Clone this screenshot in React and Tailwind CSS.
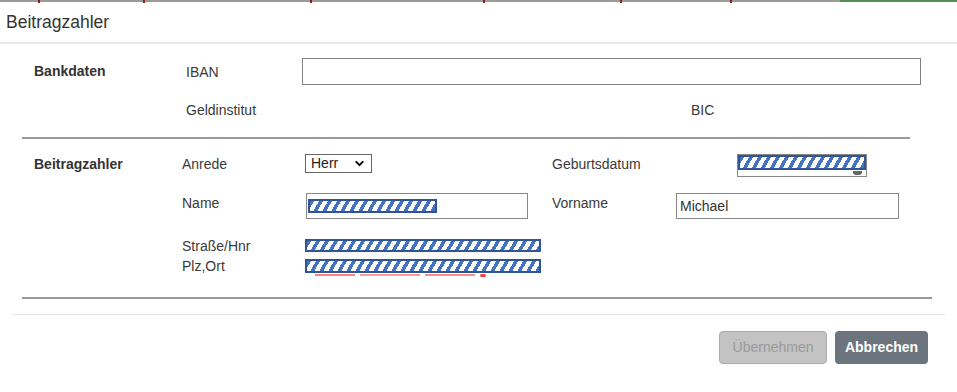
import { ChevronDown } from 'lucide-react';

const hatch =
  'border-2 border-[#2f5597] bg-[image:repeating-linear-gradient(120deg,#4472c4_0px,#4472c4_3.5px,#ffffff_3.5px,#ffffff_7.8px)]';

const strip = [38, 103, 165, 171, 135, 108, 108];

function TopStrip() {
  return (
    <div className="flex h-[2px] w-full">
      {strip.map((w, i) => (
        <div key={i} className="flex h-full">
          <div className="h-full bg-[#9a9a9a]" style={{ width: w }} />
          {i < strip.length - 1 && <div className="h-[3px] w-[2px] bg-[#8b1e1e]" />}
        </div>
      ))}
      <div className="h-full flex-1 bg-[#4f8f4f]" />
    </div>
  );
}

function Label({ children, className = '' }) {
  return <div className={`shrink-0 text-[14px] leading-[20px] text-[#3a3a3a] ${className}`}>{children}</div>;
}

export default function App() {
  return (
    <div className="h-[392px] w-[957px] overflow-hidden bg-white font-['Liberation_Sans',Arial,sans-serif]">
      <TopStrip />

      {/* header */}
      <div className="flex h-[42px] items-center border-b-2 border-[#e4e8ee] px-[6px]">
        <h1 className="text-[17.5px] text-[#333]">Beitragzahler</h1>
      </div>

      {/* Bankdaten */}
      <div className="ml-[22px] w-[888px] border-b-2 border-[#999] pt-[14px] pb-[17px]">
        <div className="flex h-[27px] items-center">
          <div className="w-[164px] shrink-0 pl-[12px] text-[14px] font-bold text-[#333]">Bankdaten</div>
          <Label className="w-[116px]">IBAN</Label>
          <div className="h-[27px] w-[619px] shrink-0 border border-[#808080] bg-white" />
        </div>
        <div className="mt-[15px] flex h-[20px] items-center">
          <div className="w-[164px] shrink-0" />
          <Label className="w-[505px]">Geldinstitut</Label>
          <Label>BIC</Label>
        </div>
      </div>

      {/* Beitragzahler */}
      <div className="ml-[22px] flex w-[910px] border-b-2 border-[#999] pt-[15px] pb-[20px]">
        <div className="w-[160px] shrink-0 pl-[12px] text-[14px] leading-[20px] font-bold text-[#333]">Beitragzahler</div>
        <div className="flex flex-col">
          <div className="flex h-[23px] items-start">
            <Label className="w-[123px]">Anrede</Label>
            <div className="w-[247px] shrink-0">
              <div className="flex h-[19px] w-[67px] items-center justify-between border border-[#666] px-[5px] text-[14px] text-[#222]">
                <span>Herr</span>
                <ChevronDown size={13} strokeWidth={3.5} className="text-black" />
              </div>
            </div>
            <Label className="w-[185px]">Geburtsdatum</Label>
            <div className="flex h-[23px] w-[130px] shrink-0 flex-col border border-[#888]">
              <div className={`h-[15px] w-full ${hatch}`} />
              <div className="flex flex-1 justify-end pr-[4px]">
                <div className="mt-[1px] h-[4px] w-[9px] rounded-b-[3px] bg-[#666]" />
              </div>
            </div>
          </div>

          <div className="mt-[16px] flex h-[26px] items-start">
            <Label className="w-[124px]">Name</Label>
            <div className="w-[246px] shrink-0">
              <div className="flex h-[26px] w-[222px] items-center border border-[#888] px-[1px]">
                <div className={`h-[14px] w-[129px] ${hatch}`} />
              </div>
            </div>
            <Label className="w-[124px]">Vorname</Label>
            <div className="flex h-[26px] w-[223px] shrink-0 items-center border border-[#888] px-[3px] text-[14px] text-[#333]">
              Michael
            </div>
          </div>

          <div className="mt-[20px] flex h-[13px] items-center">
            <Label className="w-[123px]">Straße/Hnr</Label>
            <div className={`h-[13px] w-[236px] ${hatch}`} />
          </div>

          <div className="mt-[7px] flex h-[14px] items-center">
            <Label className="w-[123px]">Plz,Ort</Label>
            <div className={`h-[14px] w-[236px] ${hatch}`} />
          </div>
          <div className="mt-[1px] ml-[133px] flex h-[3px] gap-[5px]">
            <div className="h-[2px] w-[40px] bg-[#ff8080]" />
            <div className="h-[2px] w-[60px] bg-[#ff9a9a]" />
            <div className="h-[2px] w-[50px] bg-[#ff8a8a]" />
            <div className="h-[3px] w-[6px] rounded-full bg-[#ff4040]" />
          </div>
        </div>
      </div>

      {/* footer */}
      <div className="mx-[12px] mt-[15px] border-t border-[#e3e7ec]" />
      <div className="mt-[16px] flex justify-end gap-[8px] pr-[29px]">
        <button
          disabled
          className="h-[33px] w-[108px] rounded-[4px] border border-[#aaa] bg-[#c3c3c3] text-[14px] text-[#9a9a9a]"
        >
          Übernehmen
        </button>
        <button className="h-[33px] w-[93px] rounded-[4px] bg-[#6c757d] text-[14px] font-bold text-white">
          Abbrechen
        </button>
      </div>
    </div>
  );
}
